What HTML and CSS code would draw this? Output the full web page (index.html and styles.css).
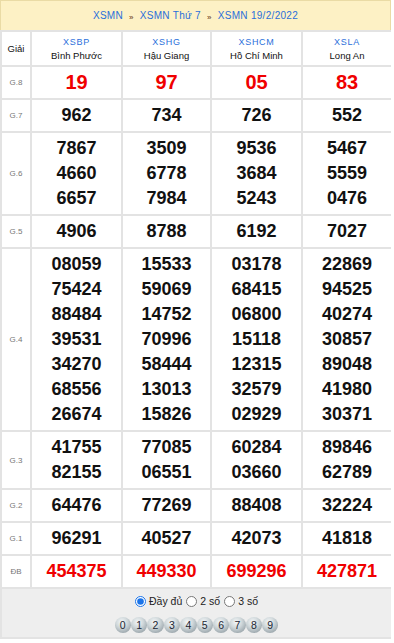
FILE: index.html
```html
<!DOCTYPE html>
<html lang="vi">
    <head>
        <meta charset="utf-8">
        <title>XSMN 19/2/2022</title>
        <link rel="stylesheet" href="styles.css">
    </head>
    <body>
        <div class="title">
            <a href="#">XSMN</a>
            <span class="sep">»</span>
            <a href="#">XSMN Thứ 7</a>
            <span class="sep">»</span>
            <a href="#">XSMN 19/2/2022</a>
        </div>
        <table class="result">
            <colgroup>
                <col class="c-label">
                <col class="c-1">
                <col class="c-2">
                <col class="c-3">
                <col class="c-4">
            </colgroup>
            <tr class="head">
                <th class="label">Giải</th>
                <th><a href="#">XSBP</a><div>Bình Phước</div></th>
                <th><a href="#">XSHG</a><div>Hậu Giang</div></th>
                <th><a href="#">XSHCM</a><div>Hồ Chí Minh</div></th>
                <th><a href="#">XSLA</a><div>Long An</div></th>
            </tr>
            <tr class="g8">
                <td class="label">G.8</td>
                <td>19</td><td>97</td><td>05</td><td>83</td>
            </tr>
            <tr>
                <td class="label">G.7</td>
                <td>962</td><td>734</td><td>726</td><td>552</td>
            </tr>
            <tr>
                <td class="label">G.6</td>
                <td><div>7867</div><div>4660</div><div>6657</div></td>
                <td><div>3509</div><div>6778</div><div>7984</div></td>
                <td><div>9536</div><div>3684</div><div>5243</div></td>
                <td><div>5467</div><div>5559</div><div>0476</div></td>
            </tr>
            <tr>
                <td class="label">G.5</td>
                <td>4906</td><td>8788</td><td>6192</td><td>7027</td>
            </tr>
            <tr>
                <td class="label">G.4</td>
                <td><div>08059</div><div>75424</div><div>88484</div><div>39531</div><div>34270</div><div>68556</div><div>26674</div></td>
                <td><div>15533</div><div>59069</div><div>14752</div><div>70996</div><div>58444</div><div>13013</div><div>15826</div></td>
                <td><div>03178</div><div>68415</div><div>06800</div><div>15118</div><div>12315</div><div>32579</div><div>02929</div></td>
                <td><div>22869</div><div>94525</div><div>40274</div><div>30857</div><div>89048</div><div>41980</div><div>30371</div></td>
            </tr>
            <tr>
                <td class="label">G.3</td>
                <td><div>41755</div><div>82155</div></td>
                <td><div>77085</div><div>06551</div></td>
                <td><div>60284</div><div>03660</div></td>
                <td><div>89846</div><div>62789</div></td>
            </tr>
            <tr>
                <td class="label">G.2</td>
                <td>64476</td><td>77269</td><td>88408</td><td>32224</td>
            </tr>
            <tr>
                <td class="label">G.1</td>
                <td>96291</td><td>40527</td><td>42073</td><td>41818</td>
            </tr>
            <tr class="db">
                <td class="label">ĐB</td>
                <td>454375</td><td>449330</td><td>699296</td><td>427871</td>
            </tr>
            <tr>
                <td class="footer" colspan="5">
                    <div class="modes">
                        <label><input type="radio" name="mode" checked>Đầy đủ</label>
                        <label><input type="radio" name="mode">2 số</label>
                        <label><input type="radio" name="mode">3 số</label>
                    </div>
                    <div class="balls">
                        <span>0</span><span>1</span><span>2</span><span>3</span><span>4</span><span>5</span><span>6</span><span>7</span><span>8</span><span>9</span>
                    </div>
                </td>
            </tr>
        </table>
    </body>
</html>
```

FILE: styles.css
```css
* {
    box-sizing: border-box;
}
:root {
    --line-color: #e3e3e3;
    --link-color: #2a6fdb;
    --red-color: #f00000;
}
html {
    font-family: "Liberation Sans", Arial, Helvetica, sans-serif;
    color: #111;
    background-color: #fff;
}
body {
    margin: 0;
    width: 391px;
}
a {
    color: var(--link-color);
    text-decoration: none;
}
.title {
    height: 30px;
    background-color: #fdf1c5;
    border: 1px solid #eadba5;
    border-bottom: 0;
    display: flex;
    align-items: center;
    justify-content: center;
    gap: 6px;
    font-size: 10px;
    letter-spacing: 0.3px;
}
.title .sep {
    color: #5a2a10;
    font-size: 8px;
    padding-top: 3px;
}
table.result {
    width: 391px;
    table-layout: fixed;
    border-collapse: collapse;
}
col.c-label { width: 30px; }
col.c-1 { width: 91px; }
col.c-2 { width: 89px; }
col.c-3 { width: 91px; }
col.c-4 { width: 90px; }
.result th,
.result td {
    border: 2px solid var(--line-color);
    text-align: center;
    vertical-align: middle;
    padding: 3px 0;
}
.result td {
    font-size: 18px;
    font-weight: bold;
    line-height: 25px;
}
.result tr.head th {
    font-weight: normal;
    font-size: 9.5px;
    line-height: 13px;
    padding: 3px 0;
}
.result tr.head th a {
    font-size: 9px;
    letter-spacing: 0.7px;
}
.result td.label {
    font-size: 8px;
    font-weight: normal;
    color: #777;
}
.result tr.g8 td {
    color: var(--red-color);
    font-size: 20px;
}
.result tr.db td {
    color: var(--red-color);
}
.result tr.g8 td.label,
.result tr.db td.label {
    color: #777;
    font-size: 8px;
}
.result td.footer {
    background-color: #eeeeee;
    padding: 5px 0 4px;
    font-size: 10.5px;
    font-weight: normal;
    line-height: 14px;
}
.modes {
    display: flex;
    justify-content: center;
    gap: 4px;
    color: #222;
}
.modes label {
    display: flex;
    align-items: center;
}
.modes input {
    width: 11px;
    height: 11px;
    margin: 0 3px 0 0;
    accent-color: #1a73e8;
}
.balls {
    display: flex;
    justify-content: center;
    margin-top: 9px;
}
.balls span {
    width: 16.4px;
    height: 16px;
    border-radius: 50%;
    background: radial-gradient(circle at 42% 32%, #f5f8f9 0%, #cfd7da 40%, #9aa5ab 80%, #838e94 100%);
    color: #1d2633;
    font-size: 10.5px;
    line-height: 16px;
    text-align: center;
}
```
